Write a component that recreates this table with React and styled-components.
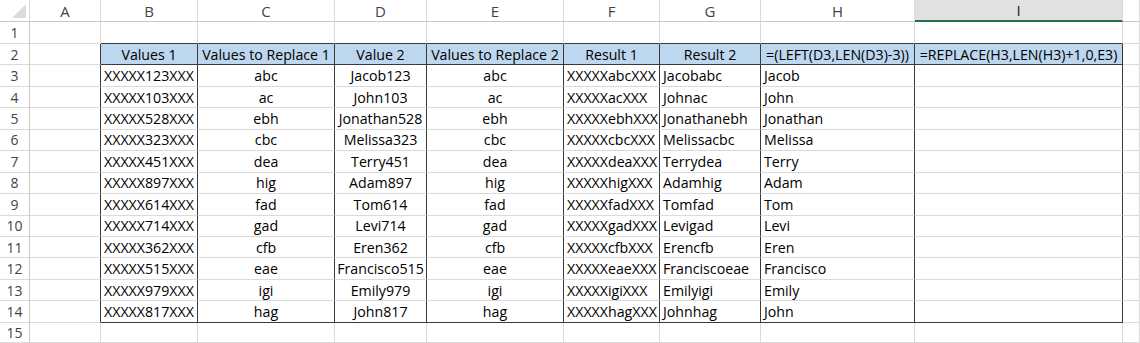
import React from "react";
import styled, { createGlobalStyle } from "styled-components";

const GlobalStyle = createGlobalStyle`
  html, body {
    margin: 0;
    padding: 0;
    background: #fff;
    overflow: hidden;
  }
`;

const COLS = [
  { key: "A", width: 71 },
  { key: "B", width: 97, align: "left" },
  { key: "C", width: 137, align: "center" },
  { key: "D", width: 92, align: "center" },
  { key: "E", width: 137, align: "center" },
  { key: "F", width: 96, align: "left" },
  { key: "G", width: 101, align: "left" },
  { key: "H", width: 154, align: "left" },
  { key: "I", width: 208, align: "left" },
];

const HEADINGS = [
  "Values 1",
  "Values to Replace 1",
  "Value 2",
  "Values to Replace 2",
  "Result 1",
  "Result 2",
  "=(LEFT(D3,LEN(D3)-3))",
  "=REPLACE(H3,LEN(H3)+1,0,E3)",
];

const DATA = [
  ["XXXXX123XXX", "abc", "Jacob123", "abc", "XXXXXabcXXX", "Jacobabc", "Jacob"],
  ["XXXXX103XXX", "ac", "John103", "ac", "XXXXXacXXX", "Johnac", "John"],
  ["XXXXX528XXX", "ebh", "Jonathan528", "ebh", "XXXXXebhXXX", "Jonathanebh", "Jonathan"],
  ["XXXXX323XXX", "cbc", "Melissa323", "cbc", "XXXXXcbcXXX", "Melissacbc", "Melissa"],
  ["XXXXX451XXX", "dea", "Terry451", "dea", "XXXXXdeaXXX", "Terrydea", "Terry"],
  ["XXXXX897XXX", "hig", "Adam897", "hig", "XXXXXhigXXX", "Adamhig", "Adam"],
  ["XXXXX614XXX", "fad", "Tom614", "fad", "XXXXXfadXXX", "Tomfad", "Tom"],
  ["XXXXX714XXX", "gad", "Levi714", "gad", "XXXXXgadXXX", "Levigad", "Levi"],
  ["XXXXX362XXX", "cfb", "Eren362", "cfb", "XXXXXcfbXXX", "Erencfb", "Eren"],
  ["XXXXX515XXX", "eae", "Francisco515", "eae", "XXXXXeaeXXX", "Franciscoeae", "Francisco"],
  ["XXXXX979XXX", "igi", "Emily979", "igi", "XXXXXigiXXX", "Emilyigi", "Emily"],
  ["XXXXX817XXX", "hag", "John817", "hag", "XXXXXhagXXX", "Johnhag", "John"],
];

const GRID = "#dadada";
const DARK = "#3a3a3a";

const Sheet = styled.div`
  display: grid;
  grid-template-columns: 30px ${COLS.map((c) => c.width + "px").join(" ")} 1fr;
  grid-template-rows: 22px 22px repeat(13, 21.45px) 1fr;
  width: 1140px;
  height: 343px;
  font-family: "Open Sans", Lato, sans-serif;
  font-size: 14.2px;
  color: #000;
`;

const Corner = styled.div`
  display: flex;
  align-items: flex-end;
  justify-content: flex-end;
  padding: 0 3px 3px 0;
  border-right: 1px solid ${GRID};
  border-bottom: 1px solid #c8c8c8;
`;

const ColHead = styled.div`
  display: flex;
  align-items: center;
  justify-content: center;
  font-size: 15px;
  color: ${(p) => (p.$selected ? "#222" : "#444")};
  background: ${(p) => (p.$selected ? "#e1e1e1" : "#fff")};
  border-right: 1px solid ${GRID};
  border-bottom: ${(p) => (p.$selected ? "2px solid #217346" : "1px solid #c8c8c8")};
`;

const RowHead = styled.div`
  display: flex;
  align-items: center;
  justify-content: center;
  font-size: 14px;
  color: #444;
  border-right: 1px solid #c8c8c8;
  border-bottom: 1px solid ${GRID};
`;

const Cell = styled.div`
  display: flex;
  align-items: center;
  justify-content: ${(p) => (p.$align === "center" ? "center" : "flex-start")};
  padding: 0 3px;
  white-space: nowrap;
  overflow: visible;
  background: ${(p) => (p.$heading ? "#bdd7ee" : "transparent")};
  border-right: 1px solid ${(p) => (p.$darkRight ? DARK : GRID)};
  border-bottom: 1px solid ${(p) => (p.$darkBottom ? DARK : GRID)};
`;

function CornerMark() {
  return (
    <svg width="14" height="14" viewBox="0 0 14 14">
      <polygon points="14,0 14,14 0,14" fill="#dcdcdc" />
    </svg>
  );
}

// row 1 is empty, row 2 headings, rows 3-14 data, row 15 empty
function rowValues(r) {
  if (r === 2) return HEADINGS;
  if (r >= 3 && r <= 14) return DATA[r - 3];
  return [];
}

export default function App() {
  const rows = Array.from({ length: 15 }, (_, i) => i + 1);

  return (
    <>
      <GlobalStyle />
      <Sheet>
        <Corner>
          <CornerMark />
        </Corner>
        {COLS.map((c) => (
          <ColHead key={c.key} $selected={c.key === "I"}>
            {c.key}
          </ColHead>
        ))}
        <ColHead />

        {rows.map((r) => {
          const values = rowValues(r);
          const inTable = r >= 2 && r <= 14;
          return (
            <React.Fragment key={r}>
              <RowHead>{r}</RowHead>
              {COLS.map((c, ci) => {
                const value = ci === 0 ? "" : values[ci - 1] || "";
                return (
                  <Cell
                    key={c.key}
                    $align={r === 2 ? "center" : c.align}
                    $heading={r === 2 && ci > 0}
                    $darkRight={inTable}
                    $darkBottom={ci > 0 && (r === 1 || r === 2 || r === 14)}
                  >
                    {value}
                  </Cell>
                );
              })}
              <Cell />
            </React.Fragment>
          );
        })}
      </Sheet>
    </>
  );
}
